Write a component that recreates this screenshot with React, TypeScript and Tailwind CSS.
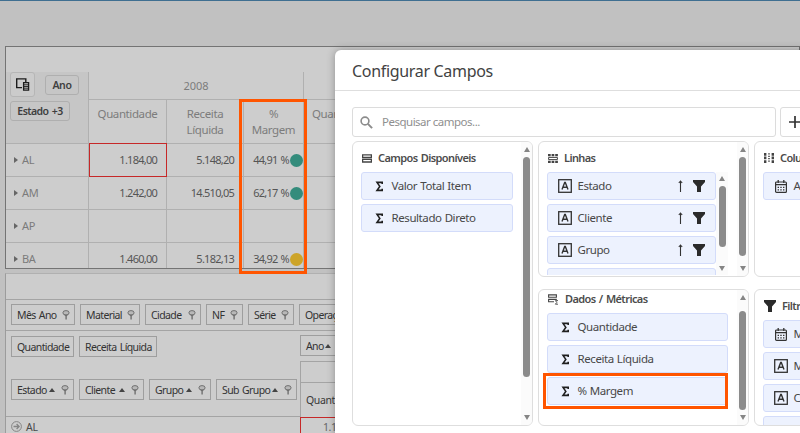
import type { ReactNode } from 'react'
import { clsx } from 'clsx'

const FONT = "font-['Noto_Sans','Open_Sans',sans-serif]"

/* ---------- icons ---------- */

function Sigma() {
  return (
    <svg width="9" height="11" viewBox="0 0 9 11" fill="none" stroke="#1f1f1f" strokeLinejoin="miter">
      <path d="M7.2 3V1.4H2L4.8 5.4 2 9.4h5.2V7.8" strokeWidth="1.6" />
    </svg>
  )
}

function BoxedA() {
  return (
    <svg width="14" height="14" viewBox="0 0 14 14" fill="none" stroke="#333">
      <rect x=".7" y=".7" width="12.6" height="12.6" strokeWidth="1.3" />
      <path d="M4 10.6 6.7 3.5h.6L10 10.6M5 8.2h4" strokeWidth="1.4" />
    </svg>
  )
}

function Calendar() {
  return (
    <svg width="12" height="13" viewBox="0 0 12 13" fill="none" stroke="#333">
      <rect x=".6" y="2" width="10.8" height="10.4" rx="1" strokeWidth="1.2" />
      <path d="M.6 4.6h10.8" strokeWidth="1.4" />
      <path d="M3.2 0v3M8.8 0v3" strokeWidth="1.3" />
      <path d="M2.6 7.3h7M2.6 9.8h7" strokeWidth="1.2" strokeDasharray="1.4 1.3" />
    </svg>
  )
}

function Funnel() {
  return (
    <svg width="12" height="12" viewBox="0 0 12 12" fill="#2b2b2b">
      <path d="M0 0h12v2L8 6.4V12H4V6.4L0 2z" />
    </svg>
  )
}

function ArrowUp() {
  return (
    <svg width="5" height="12" viewBox="0 0 5 12" fill="none" stroke="#333">
      <path d="M2.5 12V1M.8 3 2.5 1 4.2 3" strokeWidth="1.1" />
    </svg>
  )
}

function ListIcon() {
  return (
    <svg width="10" height="9" viewBox="0 0 10 9" fill="none" stroke="#444">
      <path d="M.6.9h8.8v2.6H.6zM.6 5.4h8.8V8H.6z" strokeWidth="1.3" />
    </svg>
  )
}

function RowsIcon() {
  return (
    <svg width="10" height="9" viewBox="0 0 10 9" stroke="#444" fill="none">
      <path d="M0 1.2h10M0 7.8h10" strokeWidth="2.2" strokeDasharray="2.7 .9" />
      <path d="M.6 3.4h8.8v2.2H.6z" strokeWidth="1" />
    </svg>
  )
}

function ColumnsIcon() {
  return (
    <svg width="10" height="10" viewBox="0 0 10 10" stroke="#444" fill="none">
      <path d="M1.2 0v10M8.8 0v10" strokeWidth="2.4" strokeDasharray="2.7 .9" />
      <path d="M5 .3v9.4" strokeWidth="1.6" strokeDasharray="1.2 1.2" />
    </svg>
  )
}

function DataIcon() {
  return (
    <svg width="11" height="11" viewBox="0 0 11 11" fill="none" stroke="#444">
      <path d="M.6.9h7.8v2.4H.6zM6 5.4H.6v2.4H6M5.6 5.4h3.2" strokeWidth="1.1" />
      <path d="M10 6.6H7.4L8.8 8.4 7.4 10.2H10" strokeWidth=".9" />
    </svg>
  )
}

function SearchIcon() {
  return (
    <svg width="13" height="13" viewBox="0 0 13 13" fill="none" stroke="#8c8c8c">
      <circle cx="5" cy="5" r="3.9" strokeWidth="1.6" />
      <path d="m7.9 7.9 4.2 4.2" strokeWidth="2" />
    </svg>
  )
}

function PinFilter() {
  return (
    <svg width="8" height="10" viewBox="0 0 8 10" fill="none">
      <ellipse cx="4" cy="2.8" rx="3.1" ry="2.2" fill="#b8b8b8" stroke="#707070" />
      <path d="M2 4.8h4L4.8 6.2v3.3H3.4V6.2z" fill="#707070" />
    </svg>
  )
}

function SortUp() {
  return <span className="h-0 w-0 border-x-[3px] border-b-[4px] border-x-transparent border-b-[#444]" />
}

function FieldChooser() {
  return (
    <svg width="14" height="13" viewBox="0 0 14 13" fill="none" stroke="#1c1c1c">
      <path d="M6 9.6H.7V.9h9.1V4" strokeWidth="1.4" />
      <path d="M7.6 4.6h5v7.6h-5z" fill="#c8c8c8" strokeWidth="1.3" />
      <path d="M8 6.8h4.4M8 8.5h4.4M8 10.2h4.4" strokeWidth=".9" />
    </svg>
  )
}

/* ---------- background: pivot grid ---------- */

function PivotRow({ uf, values, dot, active }: { uf: string; values: string[]; dot?: string; active?: boolean }) {
  return (
    <div className="flex h-[33px] shrink-0 text-[11px] leading-4 tracking-[-0.75px] text-[#555]">
      <div className="flex w-[83px] items-center border-r border-b border-[#b0b0b0] pl-2 text-[#7b7b7b]">
        <span className="mr-[4px] h-0 w-0 border-y-[3px] border-l-[4px] border-y-transparent border-l-[#666]" />
        <span className="tracking-[-0.3px]">{uf}</span>
      </div>
      <div
        className={clsx(
          'flex w-[78px] items-center justify-end border-b border-[#b0b0b0] pr-[9px]',
          active ? 'relative -mt-px h-[34px] border border-[#c62828] pr-[8px]' : 'border-r'
        )}
      >
        {values[0]}
      </div>
      <div className="flex w-[77px] items-center justify-end border-r border-b border-[#b0b0b0] pr-[9px]">{values[1]}</div>
      <div className="flex w-[60px] items-center justify-end border-r border-b border-[#b0b0b0]">
        <span className="mr-px [word-spacing:1px]">{values[2]}</span>
        {dot && <span className={clsx('h-[13px] w-[13px] rounded-full', dot)} />}
      </div>
      <div className="flex-1 border-b border-[#b0b0b0]" />
    </div>
  )
}

function PivotGrid() {
  return (
    <div className="flex h-[223px] shrink-0 flex-col overflow-hidden border border-[#747474] bg-[#cdcdcd] pt-[25px]">
      <div className="flex h-[72px] shrink-0 text-[12px] text-[#7c7c7c]">
        <div className="flex w-[83px] flex-col gap-[4px] border-r border-b border-[#b0b0b0] bg-[#c6c6c6] pl-1">
          <div className="flex h-[25px] items-center">
            <span className="grid h-[25px] w-[25px] place-items-center rounded-[3px] border border-[#b6b6b6] bg-[#cbcbcb]">
              <FieldChooser />
            </span>
            <span className="mt-[1px] ml-[10px] grid h-[20px] w-[34px] place-items-center rounded-[3px] border border-[#afafaf] text-[10.5px] leading-4 font-semibold tracking-[-0.4px] text-[#3f3f3f]">
              Ano
            </span>
          </div>
          <span className="grid h-[20px] w-[60px] place-items-center rounded-[3px] border border-[#afafaf] text-[10.5px] leading-4 font-semibold tracking-[-0.55px] text-[#3f3f3f] [word-spacing:1px]">
            Estado +3
          </span>
        </div>
        <div className="flex w-[215px] flex-col">
          <div className="flex h-7 items-center justify-center border-r border-b border-[#b0b0b0] text-[11px] leading-none">2008</div>
          <div className="flex flex-1 border-b border-[#b0b0b0] text-center text-[11.5px] leading-4 tracking-[-0.4px]">
            <div className="w-[78px] border-r border-[#b0b0b0] pt-[6px]">Quantidade</div>
            <div className="w-[77px] border-r border-[#b0b0b0] pt-[6px]">
              Receita
              <br />
              Líquida
            </div>
            <div className="w-[60px] border-r border-[#b0b0b0] pt-[6px]">
              %<br />
              Margem
            </div>
          </div>
        </div>
        <div className="flex flex-1 flex-col">
          <div className="h-7 border-b border-[#b0b0b0]" />
          <div className="flex-1 border-b border-[#b0b0b0] pt-[6px] pl-2 text-[11.5px] leading-4 tracking-[-0.4px]">Quantidade</div>
        </div>
      </div>
      <PivotRow uf="AL" values={['1.184,00', '5.148,20', '44,91 %']} dot="bg-[#348c7c]" active />
      <PivotRow uf="AM" values={['1.242,00', '14.510,05', '62,17 %']} dot="bg-[#348c7c]" />
      <PivotRow uf="AP" values={['', '', '']} />
      <PivotRow uf="BA" values={['1.460,00', '5.182,13', '34,92 %']} dot="bg-[#cda428]" />
    </div>
  )
}

/* ---------- background: classic grid below ---------- */

function Chip({ children, className, sort, pin }: { children: ReactNode; className: string; sort?: boolean; pin?: boolean }) {
  return (
    <span
      className={clsx(
        'flex h-[21px] shrink-0 items-center border border-[#9e9e9e] pr-1 pl-[5px] text-[10.5px] leading-4 tracking-[-0.6px] whitespace-nowrap text-[#333] [word-spacing:1px]',
        className
      )}
    >
      <span className="pt-px">{children}</span>
      {(sort || pin) && (
        <span className="ml-auto flex items-center gap-[6px]">
          {sort && <SortUp />}
          {pin && <PinFilter />}
        </span>
      )}
    </span>
  )
}

function LowerGrid() {
  return (
    <div className="mt-1 flex flex-1 flex-col border-t border-l border-[#b0b0b0] border-l-[#9c9c9c] bg-[#cdcdcd]">
      <div className="h-[26px] shrink-0 border-b border-[#a4a4a4]" />
      <div className="flex h-[31px] shrink-0 gap-[5px] border-b border-[#a4a4a4] pt-1 pl-[5px]">
        <Chip className="w-[64px]" pin>Mês Ano</Chip>
        <Chip className="w-[60px]" pin>Material</Chip>
        <Chip className="w-[56px]" pin>Cidade</Chip>
        <Chip className="w-[37px]" pin>NF</Chip>
        <Chip className="w-[46px]" pin>Série</Chip>
        <Chip className="w-[80px]" pin>Operação</Chip>
      </div>
      <div className="flex h-[86px] shrink-0">
        <div className="flex w-[294px] flex-col border-b border-[#a4a4a4] pt-[5px] pl-[5px]">
          <div className="flex gap-[5px]">
            <Chip className="w-[63px]">Quantidade</Chip>
            <Chip className="w-[78px]">Receita Líquida</Chip>
          </div>
          <div className="mt-[22px] flex gap-[5px]">
            <Chip className="w-[63px]" sort pin>Estado</Chip>
            <Chip className="w-[65px]" sort pin>Cliente</Chip>
            <Chip className="w-[62px]" sort pin>Grupo</Chip>
            <Chip className="w-[81px]" sort pin>Sub Grupo</Chip>
          </div>
        </div>
        <div className="flex flex-1 flex-col pt-1">
          <Chip className="w-[50px]" sort pin>Ano</Chip>
          <div className="mt-[5px] flex flex-1 flex-col border-t border-l border-[#a4a4a4]">
            <div className="h-[21px] border-b border-[#a4a4a4]" />
            <div className="pt-[9px] pl-[5px] text-[10.5px] leading-4 tracking-[-0.4px] text-[#383838]">Quantidade</div>
          </div>
        </div>
      </div>
      <div className="flex flex-1 text-[10.5px] leading-none text-[#4a4a4a]">
        <div className="flex w-[294px] items-start gap-[4px] pt-[4px] pl-[5px]">
          <svg width="11" height="11" viewBox="0 0 11 11" fill="none" stroke="#858585">
            <circle cx="5.5" cy="5.5" r="4.9" />
            <path d="M2.5 5.5h5.6M5.6 3l2.5 2.5L5.6 8" strokeWidth="1.3" />
          </svg>
          <span className="pt-px tracking-[-0.3px]">AL</span>
        </div>
        <div className="w-[90px] border-t border-l border-[#c62828] pt-[4px] pl-[22px] tracking-[-0.4px] text-[#666]">1.184,00</div>
      </div>
    </div>
  )
}

/* ---------- dialog ---------- */

function Scrollbar({ className, thumb }: { className?: string; thumb: string }) {
  return (
    <div className={clsx('flex shrink-0 flex-col items-center', className)}>
      <span className="h-0 w-0 border-x-[3.5px] border-b-[5px] border-x-transparent border-b-[#858585]" />
      <span className={clsx('w-[7px] rounded-full bg-[#8b8b8b]', thumb)} />
      <span className="mt-auto h-0 w-0 border-x-[3.5px] border-t-[5px] border-x-transparent border-t-[#858585]" />
    </div>
  )
}

function Field({ icon, label, className, sortable }: { icon?: ReactNode; label?: string; className?: string; sortable?: boolean }) {
  return (
    <div
      className={clsx(
        'flex h-[28px] shrink-0 items-center rounded-[3px] border border-[#d3dcfa] bg-[#edf2fe] text-[11.5px] tracking-[-0.42px] text-[#484848] [word-spacing:0.5px]',
        className
      )}
    >
      <span className="ml-[9px] flex w-[16px] shrink-0 justify-center">{icon}</span>
      <span className="ml-[4.5px] flex-1 whitespace-nowrap">{label}</span>
      {sortable && (
        <span className="flex items-center gap-[10px] pr-[10px]">
          <ArrowUp />
          <Funnel />
        </span>
      )}
    </div>
  )
}

function Heading({ icon, children, className }: { icon: ReactNode; children: ReactNode; className?: string }) {
  return (
    <h3
      className={clsx(
        'flex shrink-0 items-center gap-[6px] pl-[1px] text-[11px] leading-4 font-semibold tracking-[-0.6px] whitespace-nowrap text-[#4c4c4c] [word-spacing:1px]',
        className
      )}
    >
      {icon}
      {children}
    </h3>
  )
}

const PANEL = 'flex shrink-0 overflow-hidden rounded-[6px] border border-[#dedede] bg-white'

function FieldDialog() {
  return (
    <div className="absolute top-[50px] left-[335px] flex h-[400px] w-[540px] flex-col rounded-tl-[6px] bg-white shadow-[0_0_9px_rgba(0,0,0,0.3)]">
      <div className="flex h-[41px] shrink-0 items-center border-b border-[#dedede] pt-[2px] pl-[17px] text-[16px] tracking-[-0.32px] text-[#424242]">
        Configurar Campos
      </div>
      <div className="flex flex-col gap-1 pt-4 pl-[17px]">
        <div className="flex gap-1">
          <div className="flex h-[30px] w-[424px] items-center gap-[9px] rounded-[3px] border border-[#dcdcdc] pl-[7px] text-[11.5px] tracking-[-0.5px] text-[#8f8f8f]">
            <SearchIcon />
            Pesquisar campos...
          </div>
          <div className="flex h-[30px] w-[60px] items-center rounded-[3px] border border-[#dcdcdc] pl-2">
            <svg width="12" height="12" viewBox="0 0 12 12" stroke="#333" strokeWidth="1.7">
              <path d="M0 6h12M6 0v12" />
            </svg>
          </div>
        </div>
        <div className="flex gap-[5px]">
          <div className={clsx(PANEL, 'h-[285px] w-[181px]')}>
            <div className="flex flex-1 flex-col gap-1 pl-2">
              <Heading icon={<ListIcon />} className="mt-[8px] mb-[2px]">Campos Disponíveis</Heading>
              <Field icon={<Sigma />} label="Valor Total Item" className="w-[152px]" />
              <Field icon={<Sigma />} label="Resultado Direto" className="w-[152px]" />
            </div>
            <Scrollbar className="w-[11px] bg-[#fbfbfb] pt-[5px] pb-[5px]" thumb="mt-[5px] h-[220px]" />
          </div>

          <div className="flex flex-col gap-3">
            <div className={clsx(PANEL, 'h-[136px] w-[211px]')}>
              <div className="flex flex-1 flex-col gap-[5px] pl-2">
                <Heading icon={<RowsIcon />} className="mt-[8px] mb-px">Linhas</Heading>
                <div className="flex h-[103px] overflow-hidden">
                  <div className="flex flex-col gap-1">
                    <Field icon={<BoxedA />} label="Estado" className="w-[169px]" sortable />
                    <Field icon={<BoxedA />} label="Cliente" className="w-[169px]" sortable />
                    <Field icon={<BoxedA />} label="Grupo" className="w-[169px]" sortable />
                    <Field className="w-[169px]" />
                  </div>
                  <Scrollbar className="w-[12px] bg-[#fbfbfb] pt-[4px] pb-[4px]" thumb="mt-[5px] h-[61px]" />
                </div>
              </div>
              <Scrollbar className="w-[11px] bg-[#fbfbfb] pt-[5px] pb-[5px]" thumb="mt-[5px] h-[99px]" />
            </div>
            <div className={clsx(PANEL, 'h-[137px] w-[211px]')}>
              <div className="flex flex-1 flex-col gap-1 pl-2">
                <Heading icon={<DataIcon />} className="mt-[1px] mb-[2px] gap-[5px]">Dados / Métricas</Heading>
                <Field icon={<Sigma />} label="Quantidade" className="w-[181px]" />
                <Field icon={<Sigma />} label="Receita Líquida" className="w-[181px]" />
                <Field icon={<Sigma />} label="% Margem" className="w-[181px]" />
              </div>
              <Scrollbar className="w-[11px] bg-[#fbfbfb] pt-[5px] pb-[5px]" thumb="mt-[11px] h-[99px]" />
            </div>
          </div>

          <div className="flex flex-col gap-3">
            <div className={clsx(PANEL, 'h-[136px] w-[120px]')}>
              <div className="flex flex-1 flex-col gap-[5px] pl-2">
                <Heading icon={<ColumnsIcon />} className="mt-[8px] mb-px">Colunas</Heading>
                <Field icon={<Calendar />} label="Ano" className="w-[100px]" />
              </div>
            </div>
            <div className={clsx(PANEL, 'h-[137px] w-[120px] pb-px')}>
              <div className="flex flex-1 flex-col gap-1 pl-2">
                <Heading icon={<Funnel />} className="mt-[8px] mb-[2px] gap-[4px] pl-0">Filtros</Heading>
                <Field icon={<Calendar />} label="Mês Ano" className="w-[100px]" />
                <Field icon={<BoxedA />} label="Material" className="w-[100px]" />
                <Field icon={<BoxedA />} label="Cidade" className="w-[100px]" />
                <Field className="w-[100px]" />
              </div>
            </div>
          </div>
        </div>
      </div>
    </div>
  )
}

export default function App() {
  return (
    <div className={clsx('relative h-[433px] w-[800px] overflow-hidden bg-[#c1c1c1]', FONT)}>
      <div className="flex h-full flex-col border-t border-[#3f6f91] pt-[45px] pl-[5px]">
        <PivotGrid />
        <LowerGrid />
      </div>
      {/* callout around the margin column */}
      <div className="absolute top-[99px] left-[239px] h-[175px] w-[68px] border-[3px] border-[#ff5500]" />
      <FieldDialog />
      {/* callout around the margin metric */}
      <div className="absolute top-[373px] left-[543px] h-[36px] w-[185px] border-[3px] border-[#ff5500]" />
    </div>
  )
}
